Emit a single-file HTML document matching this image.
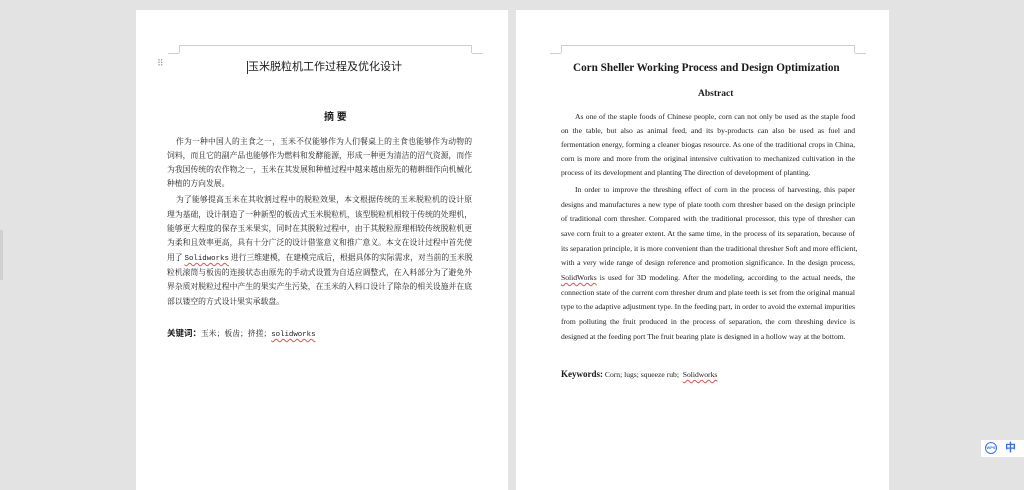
<!DOCTYPE html>
<html><head><meta charset="utf-8"><style>
*{margin:0;padding:0;box-sizing:border-box}
body{width:1024px;height:483px;background:#e3e3e3;position:relative;overflow:hidden}
.page{position:absolute;top:10px;height:480px;background:#fff}
.l{position:absolute;white-space:nowrap;text-align:justify;text-align-last:justify;color:#1a1a1a}
.last{text-align-last:left}
.cn{font-family:"Liberation Serif","Noto Serif CJK SC",serif;font-size:7.8px;line-height:12px;left:167px;width:305px}
.en{font-family:"Liberation Serif",serif;font-size:7.6px;line-height:12px;left:561px;width:294px}
.hl{position:absolute;height:1px;background:#cfcfcf}
.u{text-decoration:underline wavy #e05050;text-decoration-thickness:1px;text-underline-offset:2px}
.mono{font-family:"Liberation Mono",monospace;font-size:7.4px}
</style></head><body>
<div style="position:absolute;left:0;top:230px;width:3px;height:50px;background:#d0d0d0"></div>
<div class="page" style="left:136px;width:372px"></div>
<div class="page" style="left:516px;width:373px"></div>
<div class="hl" style="left:179px;top:45px;width:293px"></div>
<div class="hl" style="left:179px;top:45px;width:1px;height:8px"></div>
<div class="hl" style="left:471px;top:45px;width:1px;height:8px"></div>
<div class="hl" style="left:168px;top:53px;width:11px"></div>
<div class="hl" style="left:472px;top:53px;width:11px"></div>
<div class="hl" style="left:561px;top:45px;width:294px"></div>
<div class="hl" style="left:561px;top:45px;width:1px;height:8px"></div>
<div class="hl" style="left:854px;top:45px;width:1px;height:8px"></div>
<div class="hl" style="left:550px;top:53px;width:11px"></div>
<div class="hl" style="left:855px;top:53px;width:11px"></div>
<div style="position:absolute;left:157px;top:62px;font-size:9px;color:#999;line-height:3px;letter-spacing:1px">⠿</div>
<div style="position:absolute;left:247px;top:61px;width:1px;height:13px;background:#333"></div>
<div class="l" style="left:248px;top:60px;font-family:'Liberation Sans','Noto Sans CJK SC',sans-serif;font-size:11px;line-height:14px;text-align-last:left">玉米脱粒机工作过程及优化设计</div>
<div class="l" style="left:324px;top:111px;font-family:'Liberation Sans','Noto Sans CJK SC',sans-serif;font-size:10px;font-weight:bold;line-height:14px;text-align-last:left">摘 要</div>
<div class="l cn" style="top:136px;left:176px;width:296px">作为一种中国人的主食之一，玉米不仅能够作为人们餐桌上的主食也能够作为动物的</div>
<div class="l cn" style="top:150px">饲料，而且它的副产品也能够作为燃料和发酵能源，形成一种更为清洁的沼气资源，而作</div>
<div class="l cn" style="top:164px">为我国传统的农作物之一，玉米在其发展和种植过程中越来越由原先的精耕细作向机械化</div>
<div class="l cn last" style="top:178px">种植的方向发展。</div>
<div class="l cn" style="top:194px;left:176px;width:296px">为了能够提高玉米在其收割过程中的脱粒效果，本文根据传统的玉米脱粒机的设计原</div>
<div class="l cn" style="top:209px">理为基础，设计制造了一种新型的板齿式玉米脱粒机，该型脱粒机相较于传统的处理机，</div>
<div class="l cn" style="top:223px">能够更大程度的保存玉米果实，同时在其脱粒过程中，由于其脱粒原理相较传统脱粒机更</div>
<div class="l cn" style="top:237px">为柔和且效率更高，具有十分广泛的设计借鉴意义和推广意义。本文在设计过程中首先使</div>
<div class="l cn" style="top:252px">用了 <span class="mono u">Solidworks</span> 进行三维建模，在建模完成后，根据具体的实际需求，对当前的玉米脱</div>
<div class="l cn" style="top:267px">粒机滚筒与板齿的连接状态由原先的手动式设置为自适应调整式，在入料部分为了避免外</div>
<div class="l cn" style="top:281px">界杂质对脱粒过程中产生的果实产生污染，在玉米的入料口设计了除杂的相关设施并在底</div>
<div class="l cn last" style="top:296px">部以镂空的方式设计果实承载盘。</div>
<div class="l cn last" style="top:327px"><b style="font-family:'Liberation Sans','Noto Sans CJK SC',sans-serif;font-size:8.5px">关键词：</b>玉米；板齿；挤搓；<span class="mono u">solidworks</span></div>
<div class="l" style="left:573px;top:61px;font-family:'Liberation Serif',serif;font-weight:bold;font-size:11.2px;line-height:14px;text-align-last:left">Corn Sheller Working Process and Design Optimization</div>
<div class="l" style="left:698px;top:88px;font-family:'Liberation Serif',serif;font-weight:bold;font-size:9.5px;line-height:12px;text-align-last:left">Abstract</div>
<div class="l en" style="top:111px;left:575px;width:280px">As one of the staple foods of Chinese people, corn can not only be used as the staple food</div>
<div class="l en" style="top:125px">on the table, but also as animal feed, and its by-products can also be used as fuel and</div>
<div class="l en" style="top:139px">fermentation energy, forming a cleaner biogas resource. As one of the traditional crops in China,</div>
<div class="l en" style="top:153px">corn is more and more from the original intensive cultivation to mechanized cultivation in the</div>
<div class="l en last" style="top:167px">process of its development and planting The direction of development of planting.</div>
<div class="l en" style="top:184px;left:575px;width:280px">In order to improve the threshing effect of corn in the process of harvesting, this paper</div>
<div class="l en" style="top:199px">designs and manufactures a new type of plate tooth corn thresher based on the design principle</div>
<div class="l en" style="top:213px">of traditional corn thresher. Compared with the traditional processor, this type of thresher can</div>
<div class="l en" style="top:228px">save corn fruit to a greater extent. At the same time, in the process of its separation, because of</div>
<div class="l en" style="top:243px">its separation principle, it is more convenient than the traditional thresher Soft and more efficient,</div>
<div class="l en" style="top:257px">with a very wide range of design reference and promotion significance. In the design process,</div>
<div class="l en" style="top:272px"><span class="u">SolidWorks</span> is used for 3D modeling. After the modeling, according to the actual needs, the</div>
<div class="l en" style="top:287px">connection state of the current corn thresher drum and plate teeth is set from the original manual</div>
<div class="l en" style="top:301px">type to the adaptive adjustment type. In the feeding part, in order to avoid the external impurities</div>
<div class="l en" style="top:316px">from polluting the fruit produced in the process of separation, the corn threshing device is</div>
<div class="l en last" style="top:331px">designed at the feeding port The fruit bearing plate is designed in a hollow way at the bottom.</div>
<div class="l en last" style="top:368px"><b style="font-size:9px">Keywords:</b> Corn; lugs; squeeze rub; &nbsp;<span class="u">Solidworks</span></div>
<div style="position:absolute;left:981px;top:440px;width:43px;height:17px;background:#fff"></div>
<div style="position:absolute;left:985px;top:442px;width:12px;height:12px;border:1.5px solid #3b6ff0;border-radius:50%;font:bold 4px 'Liberation Sans',sans-serif;color:#3b6ff0;text-align:center;line-height:9px">WPS</div>
<div style="position:absolute;left:1005px;top:441px;font:bold 11px 'Liberation Sans','Noto Sans CJK SC',sans-serif;color:#3b6ff0;line-height:14px">中</div>
</body></html>
